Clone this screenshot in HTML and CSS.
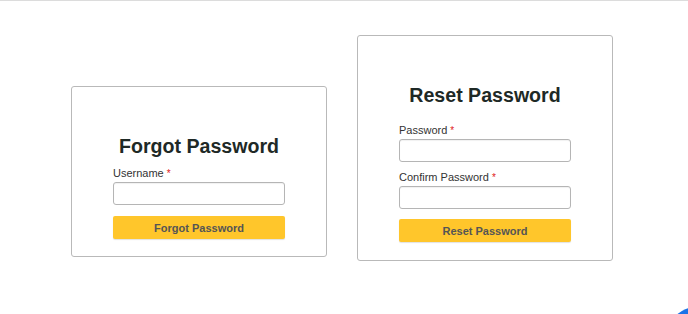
FILE: index.html
```html
<!DOCTYPE html>
<html lang="en">
    <head>
        <title>Password</title>
        <meta charset="UTF-8">
        <meta name="viewport" content="width=device-width, initial-scale=1">
        <link rel="stylesheet" href="styles.css">
    </head>
    <body>
        <div id="main">
            <div class="card card-forgot">
                <h2 class="title">Forgot Password</h2>
                <form class="form">
                    <label class="label">Username <span class="req">*</span></label>
                    <input class="input" type="text">
                    <button class="btn" type="button">Forgot Password</button>
                </form>
            </div>
            <div class="card card-reset">
                <h2 class="title">Reset Password</h2>
                <form class="form">
                    <label class="label">Password <span class="req">*</span></label>
                    <input class="input" type="password">
                    <label class="label">Confirm Password <span class="req">*</span></label>
                    <input class="input" type="password">
                    <button class="btn" type="button">Reset Password</button>
                </form>
            </div>
        </div>
        <div class="fab"></div>
    </body>
</html>
```

FILE: styles.css
```css
body,h2,form{margin: 0;padding: 0}

html,body{height: 100%;overflow: hidden;background: #fff;font-family: "Liberation Sans", Arial, sans-serif}
body{border-top: 1px solid #dcdcdc;box-sizing: border-box;position: relative}

#main{display: flex;justify-content: center;align-items: flex-start;gap: 30px;padding-right: 4px}

.card{width: 256px;box-sizing: border-box;border: 1px solid #b9b9b9;border-radius: 3px;padding: 47px 41px 17px}
.card-forgot{margin-top: 85px}
.card-reset{margin-top: 34px;padding-bottom: 18px}

.title{font-size: 19.6px;line-height: 24px;font-weight: bold;text-align: center;color: #1e2926}
.form{display: flex;flex-direction: column}
.card-forgot .form{margin-top: 8px}
.card-reset .form{margin-top: 16px}

.label{font-size: 11px;line-height: 14px;color: #333}
.req{color: #e02020;font-size: 10px}
.input{height: 23px;box-sizing: border-box;margin: 1px 0 0;border: 1px solid #b5b5b5;border-radius: 3px;
box-shadow: inset 0 1px 1px rgba(0,0,0,.06);background: #fff;outline: none}
.input + .label{margin-top: 8px}
.btn{margin-top: 11px;height: 23px;border: none;border-radius: 2px;background: #ffc62b;
box-shadow: 0 1px 1px rgba(0,0,0,.12);color: #555;font: bold 11px "Liberation Sans", Arial, sans-serif;cursor: pointer}
.card-reset .btn{margin-top: 10px}

.fab{position: absolute;left: 668px;top: 306px;width: 56px;height: 56px;border-radius: 50%;background: #1a73e8}
```
